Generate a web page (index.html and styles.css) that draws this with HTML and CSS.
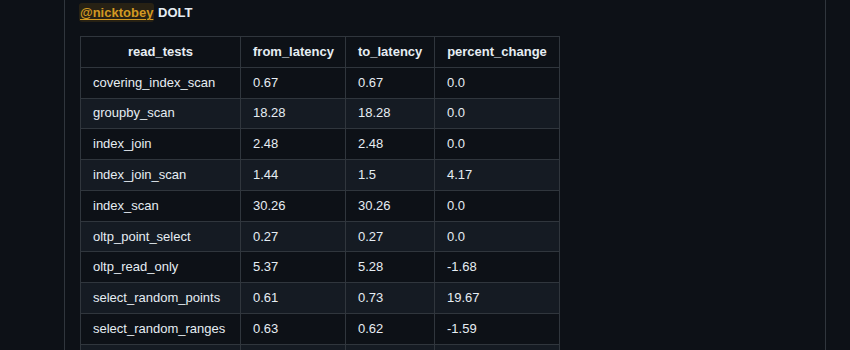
FILE: index.html
```html
<!DOCTYPE html>
<html lang="en">
<head>
<meta charset="utf-8">
<title>Comment</title>
<link rel="stylesheet" href="styles.css">
</head>
<body>
<div class="comment">
  <div class="comment-body">
    <p class="lead"><a class="user-mention" href="#">@nicktobey</a> <strong>DOLT</strong></p>
    <table class="results">
      <colgroup>
        <col class="c1"><col class="c2"><col class="c3"><col class="c4">
      </colgroup>
      <thead>
        <tr><th>read_tests</th><th>from_latency</th><th>to_latency</th><th>percent_change</th></tr>
      </thead>
      <tbody>
        <tr><td>covering_index_scan</td><td>0.67</td><td>0.67</td><td>0.0</td></tr>
        <tr><td>groupby_scan</td><td>18.28</td><td>18.28</td><td>0.0</td></tr>
        <tr><td>index_join</td><td>2.48</td><td>2.48</td><td>0.0</td></tr>
        <tr><td>index_join_scan</td><td>1.44</td><td>1.5</td><td>4.17</td></tr>
        <tr><td>index_scan</td><td>30.26</td><td>30.26</td><td>0.0</td></tr>
        <tr><td>oltp_point_select</td><td>0.27</td><td>0.27</td><td>0.0</td></tr>
        <tr><td>oltp_read_only</td><td>5.37</td><td>5.28</td><td>-1.68</td></tr>
        <tr><td>select_random_points</td><td>0.61</td><td>0.73</td><td>19.67</td></tr>
        <tr><td>select_random_ranges</td><td>0.63</td><td>0.62</td><td>-1.59</td></tr>
        <tr class="next-row"><td></td><td></td><td></td><td></td></tr>
      </tbody>
    </table>
  </div>
</div>
</body>
</html>
```

FILE: styles.css
```css
html, body {
  margin: 0;
  padding: 0;
  background: #0d1117;
  height: 350px;
  overflow: hidden;
}

body {
  font-family: "Liberation Sans", Arial, sans-serif;
  font-size: 13px;
  color: #e6edf3;
}

.comment {
  margin-left: 64px;
  width: 760px;
  border-left: 1px solid #30363d;
  border-right: 1px solid #30363d;
  min-height: 400px;
}

.comment-body {
  padding: 3px 15px 0 15px;
}

.lead {
  margin: 0 0 14px 0;
  line-height: 19px;
}

.lead strong {
  font-weight: 700;
}

.user-mention {
  font-weight: 700;
  color: #d29922;
  background: rgba(187, 128, 9, 0.15);
  text-decoration: underline;
  text-decoration-thickness: 1px;
  text-underline-offset: 2px;
  padding: 2px 1px 2px 1px;
  margin-left: -1px;
  border-radius: 3px;
}

.results {
  border-collapse: collapse;
  table-layout: fixed;
  width: 479px;
}

.c1 { width: 160px; }
.c2 { width: 105px; }
.c3 { width: 89px; }
.c4 { width: 125px; }

.results th,
.results td {
  border: 1px solid #30363d;
  padding: 5.9px 12px;
  line-height: 18px;
  white-space: nowrap;
}

.results th {
  font-weight: 700;
  text-align: center;
}

.results td {
  text-align: left;
}

.results tbody tr:nth-child(2n) {
  background: #151b23;
}

.results .next-row td {
  height: 18px;
}
```
